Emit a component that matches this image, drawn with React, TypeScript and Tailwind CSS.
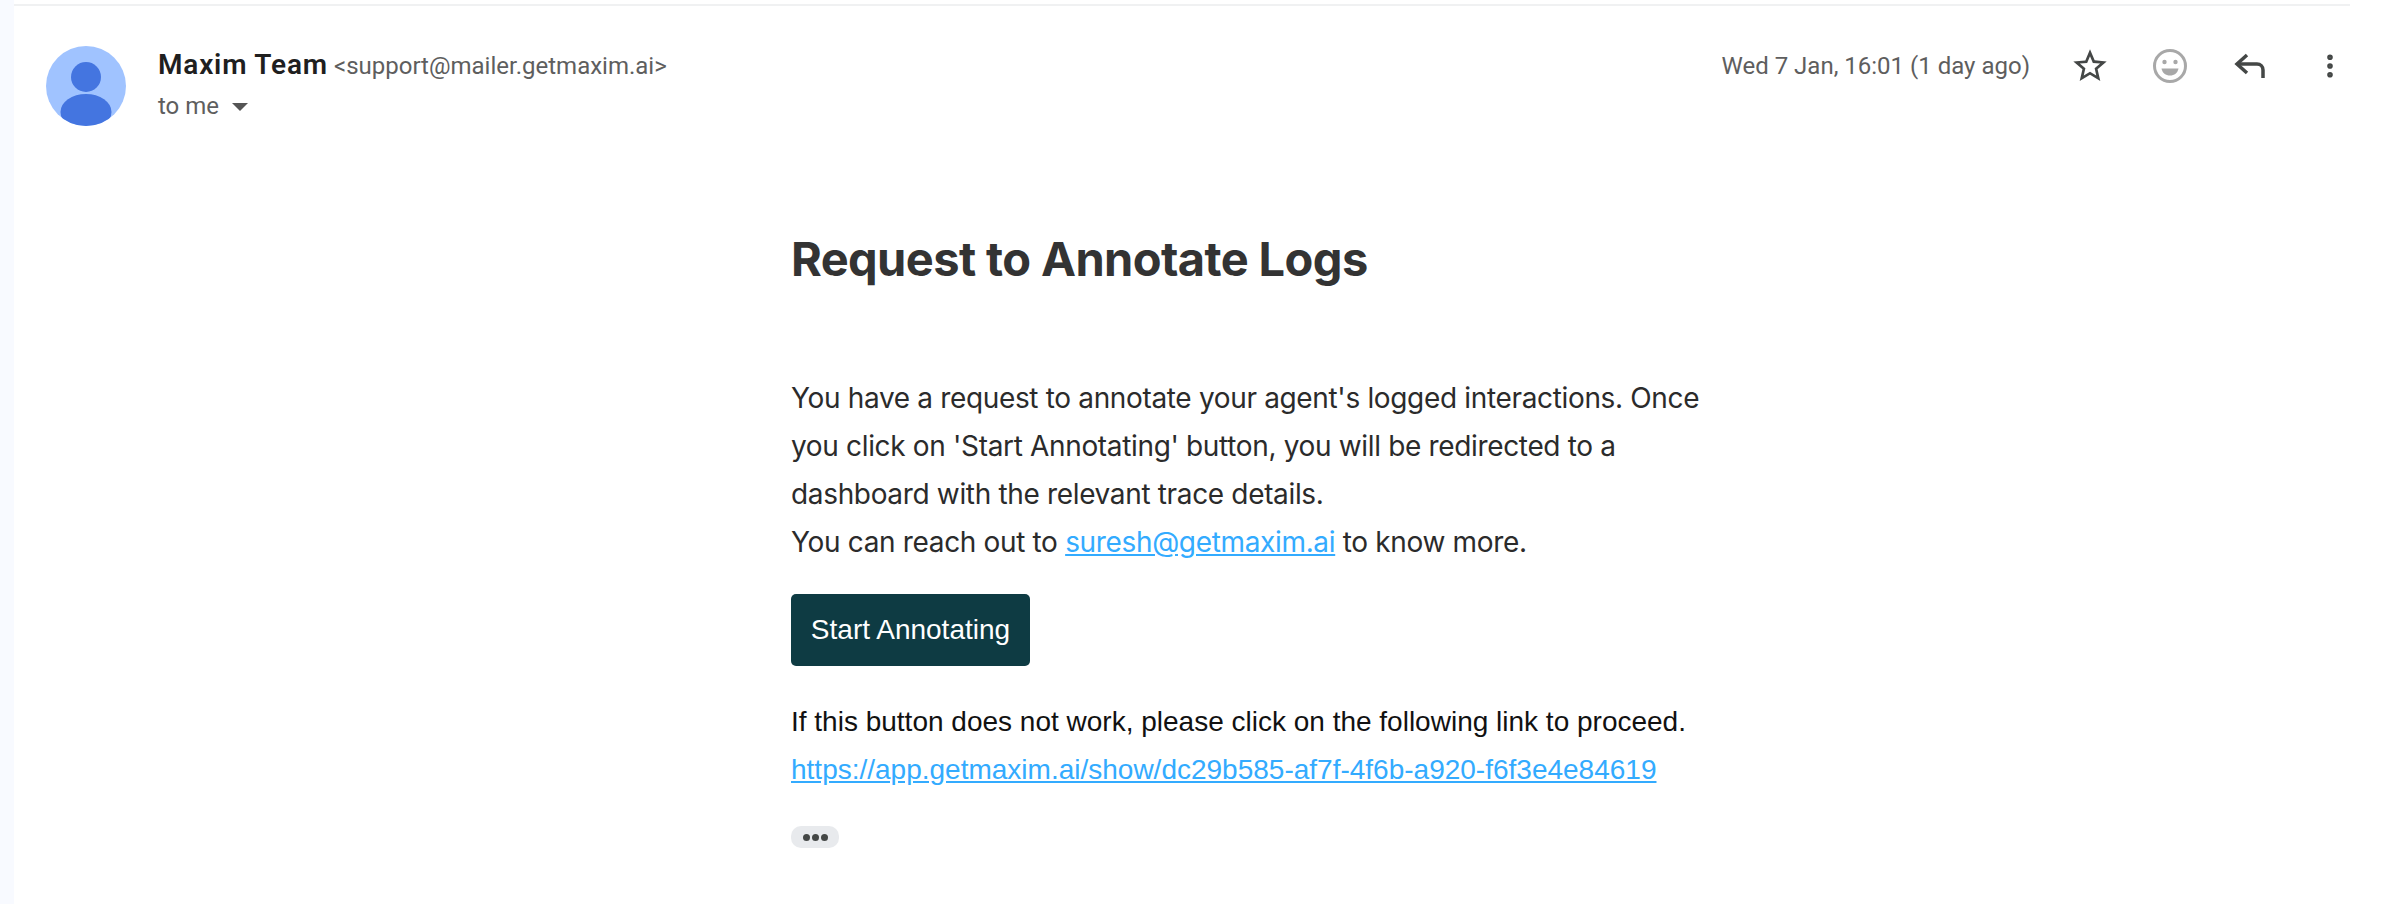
import { MoreVertical } from "lucide-react";

function Avatar() {
  return (
    <svg className="w-[80px] h-[80px] shrink-0" viewBox="0 0 80 80">
      <defs>
        <clipPath id="avatar-clip">
          <circle cx="40" cy="40" r="40" />
        </clipPath>
      </defs>
      <circle cx="40" cy="40" r="40" fill="#a0c3ff" />
      <g clipPath="url(#avatar-clip)" fill="#4475e0">
        <ellipse cx="40" cy="31" rx="15" ry="15" />
        <ellipse cx="40" cy="66" rx="25.5" ry="18" />
      </g>
    </svg>
  );
}

function StarIcon() {
  return (
    <svg className="w-[40px] h-[40px]" viewBox="0 0 24 24" fill="#444746">
      <path d="M22 9.24l-7.19-.62L12 2 9.19 8.63 2 9.24l5.46 4.73L5.82 21 12 17.27 18.18 21l-1.63-7.03L22 9.24zM12 15.4l-3.76 2.27 1-4.28-3.32-2.88 4.38-.38L12 6.1l1.71 4.04 4.38.38-3.32 2.88 1 4.28L12 15.4z" />
    </svg>
  );
}

function SmileIcon() {
  return (
    <svg className="w-[36px] h-[36px]" viewBox="0 0 36 36">
      <circle cx="18" cy="18" r="15.5" fill="none" stroke="#a8a8a8" strokeWidth="3" />
      <circle cx="12.5" cy="14" r="2.2" fill="#a8a8a8" />
      <circle cx="23.5" cy="14" r="2.2" fill="#a8a8a8" />
      <path d="M9.5 20.5h17c-.8 4.4-4.2 7-8.5 7s-7.7-2.6-8.5-7z" fill="#a8a8a8" />
    </svg>
  );
}

function ReplyIcon() {
  return (
    <svg className="w-[32px] h-[26px]" viewBox="0 0 32 26" fill="none" stroke="#444746" strokeWidth="3.5">
      <path d="M13 2 3 11l10 9" />
      <path d="M3 11h20c3.5 0 6 2.5 6 6v8" />
    </svg>
  );
}

export default function App() {
  return (
    <div className="flex h-[904px] w-full bg-white font-['Roboto',sans-serif]">
      <div className="w-[14px] shrink-0 bg-[#f8faff]" />
      <div className="w-[2336px] shrink-0">
        <div className="mt-[4px] h-[2px] bg-[#f0f1f2]" />

        <div className="flex items-start pl-[32px] pt-[40px]">
          <Avatar />
          <div className="ml-[32px] pt-[3px]">
            <div className="flex items-baseline h-[32px]">
              <span className="text-[28px] leading-[32px] font-semibold tracking-[0.8px] text-[#1f1f1f]">Maxim Team</span>
              <span className="ml-[6px] text-[24px] leading-[32px] text-[#5e5e5e]">&lt;support@mailer.getmaxim.ai&gt;</span>
            </div>
            <div className="mt-[11px] flex items-center h-[28px] text-[24px] text-[#5e5e5e]">
              <span>to me</span>
              <span className="ml-[13px] mt-[2px] h-0 w-0 border-x-[8px] border-t-[8px] border-x-transparent border-t-[#555555]" />
            </div>
          </div>

          <div className="ml-auto flex items-center pr-[5px]">
            <span className="text-[24px] leading-[32px] text-[#5e5e5e]">Wed 7 Jan, 16:01 (1 day ago)</span>
            <div className="ml-[40px] flex items-center">
              <StarIcon />
              <div className="ml-[42px]">
                <SmileIcon />
              </div>
              <div className="ml-[46px]">
                <ReplyIcon />
              </div>
              <MoreVertical className="ml-[49px] w-[30px] h-[30px] text-[#444746]" strokeWidth={2.5} />
            </div>
          </div>
        </div>

        <div className="ml-[777px] mt-[103px] w-[960px]">
          <h1 className="font-['Inter',sans-serif] text-[47px] leading-[60px] font-bold tracking-[-0.6px] text-[#333333]">
            Request to Annotate Logs
          </h1>

          <p className="mt-[85px] w-[940px] font-['Inter',sans-serif] text-[28px] leading-[48px] tracking-[-0.34px] text-[#2b2b2b]">
            You have a request to annotate your agent's logged interactions. Once you click on 'Start Annotating' button, you will be redirected to a dashboard with the relevant trace details.
            <br />
            You can reach out to{" "}
            <a href="#" className="text-[#33abff] underline">suresh@getmaxim.ai</a> to know more.
          </p>

          <a href="#" className="mt-[28px] flex h-[72px] w-[239px] items-center justify-center rounded-[5px] bg-[#0e3b43] font-['Liberation_Sans',sans-serif] text-[28px] text-white">
            Start Annotating
          </a>

          <p className="mt-[32px] font-['Liberation_Sans',sans-serif] text-[28px] leading-[48px] text-[#111111]">
            If this button does not work, please click on the following link to proceed.
            <br />
            <a href="#" className="text-[#33abff] underline">https://app.getmaxim.ai/show/dc29b585-af7f-4f6b-a920-f6f3e4e84619</a>
          </p>

          <div className="mt-[32px] flex h-[22px] w-[48px] items-center justify-center gap-[2px] rounded-[10px] bg-[#e8eaed]">
            <span className="h-[7px] w-[7px] rounded-full bg-[#444746]" />
            <span className="h-[7px] w-[7px] rounded-full bg-[#444746]" />
            <span className="h-[7px] w-[7px] rounded-full bg-[#444746]" />
          </div>
        </div>
      </div>
    </div>
  );
}
